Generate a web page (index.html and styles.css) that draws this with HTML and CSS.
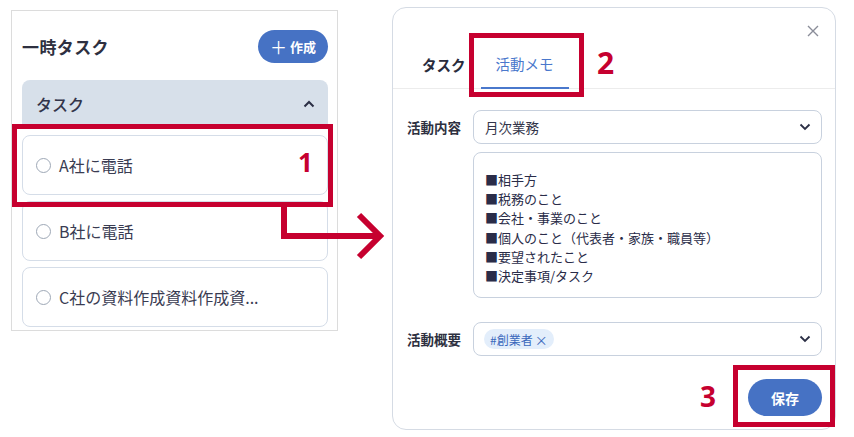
FILE: index.html
```html
<!DOCTYPE html>
<html lang="ja">
<head>
<meta charset="utf-8">
<link rel="stylesheet" href="styles.css">
</head>
<body>
<div class="canvas">
  <section class="panel">
    <div class="panel-head">
      <h1 class="panel-title">一時タスク</h1>
      <button class="btn-create"><span class="plus">＋</span>作成</button>
    </div>
    <div class="acc-head">
      <span>タスク</span>
      <svg class="chev-up" width="12" height="8" viewBox="0 0 12 8"><path d="M1.5 6.5 L6 2 L10.5 6.5" fill="none" stroke="#2b2f45" stroke-width="2"/></svg>
    </div>
    <div class="acc-body">
      <div class="card"><span class="radio"></span><span class="card-text">A社に電話</span></div>
      <div class="card"><span class="radio"></span><span class="card-text">B社に電話</span></div>
      <div class="card"><span class="radio"></span><span class="card-text">C社の資料作成資料作成資...</span></div>
    </div>
  </section>

  <section class="modal">
    <div class="modal-top">
      <span class="close">
        <svg width="12" height="12" viewBox="0 0 12 12"><path d="M1 1 L11 11 M11 1 L1 11" stroke="#8a8d99" stroke-width="1.4"/></svg>
      </span>
    </div>
    <div class="tabs">
      <div class="tab tab-plain">タスク</div>
      <div class="tab tab-active">活動メモ</div>
    </div>
    <div class="form">
      <div class="row">
        <label class="lbl">活動内容</label>
        <div class="fields">
          <div class="select">
            <span>月次業務</span>
            <svg class="chev" width="12" height="8" viewBox="0 0 12 8"><path d="M1.5 1.5 L6 6 L10.5 1.5" fill="none" stroke="#2b2f45" stroke-width="1.8"/></svg>
          </div>
          <div class="textarea">
            <div>■相手方</div>
            <div>■税務のこと</div>
            <div>■会社・事業のこと</div>
            <div>■個人のこと（代表者・家族・職員等）</div>
            <div>■要望されたこと</div>
            <div>■決定事項/タスク</div>
          </div>
        </div>
      </div>
      <div class="row row-2">
        <label class="lbl">活動概要</label>
        <div class="fields">
          <div class="select">
            <span class="tag">#創業者 <span class="tag-x">×</span></span>
            <svg class="chev" width="12" height="8" viewBox="0 0 12 8"><path d="M1.5 1.5 L6 6 L10.5 1.5" fill="none" stroke="#2b2f45" stroke-width="1.8"/></svg>
          </div>
        </div>
      </div>
      <div class="actions">
        <button class="btn-save">保存</button>
      </div>
    </div>
  </section>

  <div class="mark mark1"></div>
  <div class="mark mark2"></div>
  <div class="mark mark3"></div>
  <span class="num num1">1</span>
  <span class="num num2">2</span>
  <span class="num num3">3</span>
  <svg class="arrow" width="854" height="437" viewBox="0 0 854 437">
    <path d="M284 206 L284 236 L380 236" fill="none" stroke="#c6002f" stroke-width="6"/>
    <path d="M359 215 L380 236 L359 257" fill="none" stroke="#c6002f" stroke-width="6"/>
  </svg>
</div>
</body>
</html>
```

FILE: styles.css
```css
* { box-sizing: border-box; }
html, body { margin: 0; padding: 0; background: #fff; }
body {
  font-family: "Noto Sans CJK JP", "Noto Sans", sans-serif;
  color: #33354a;
}
.canvas {
  position: relative;
  width: 854px;
  height: 437px;
  display: flex;
  align-items: flex-start;
  padding: 7px 0 0 11px;
}

/* left panel */
.panel {
  width: 327px;
  height: 321px;
  margin-top: 3px;
  border: 1px solid #dcdcdc;
  padding: 19px 9px 3px 10px;
  display: flex;
  flex-direction: column;
}
.panel-head {
  display: flex;
  justify-content: space-between;
  align-items: center;
  height: 33px;
}
.panel-title {
  margin: 0;
  font-size: 17px;
  font-weight: 700;
  color: #2e3040;
  letter-spacing: 0.4px;
}
.btn-create {
  width: 70px;
  height: 33px;
  border: none;
  border-radius: 17px;
  background: #4672c4;
  color: #fff;
  font-family: inherit;
  font-size: 13px;
  font-weight: 700;
  display: flex;
  align-items: center;
  justify-content: center;
  gap: 3px;
  padding: 0;
}
.plus { font-size: 17px; font-weight: 400; line-height: 1; }
.acc-head {
  margin-top: 17px;
  height: 48px;
  background: #d7e0ea;
  border-radius: 8px 8px 0 0;
  display: flex;
  align-items: center;
  justify-content: space-between;
  padding: 0 13px 0 14px;
  font-size: 16px;
  font-weight: 500;
  color: #33354a;
}
.acc-body {
  display: flex;
  flex-direction: column;
  gap: 6px;
  padding-top: 7px;
}
.card {
  height: 60px;
  border: 1px solid #d5dde8;
  border-radius: 8px;
  display: flex;
  align-items: center;
  padding-left: 13px;
  gap: 8px;
  font-size: 16px;
  color: #3a3c52;
}
.radio {
  width: 15px;
  height: 15px;
  border: 1.5px solid #9ea8b6;
  border-radius: 50%;
}

/* modal */
.modal {
  margin-left: 54px;
  width: 444px;
  height: 423px;
  border: 1px solid #d5dbe4;
  border-radius: 14px;
  display: flex;
  flex-direction: column;
}
.modal-top {
  height: 29px;
  display: flex;
  justify-content: flex-end;
  align-items: flex-end;
  padding-right: 16px;
}
.close { display: block; height: 12px; }
.close svg { display: block; }
.tabs {
  display: flex;
  height: 52px;
  border-bottom: 1px solid #ececec;
  padding-left: 14px;
  padding-top: 3px;
}
.tab {
  padding: 0 15px;
  display: flex;
  align-items: center;
  font-size: 14.5px;
}
.tab-plain { font-weight: 700; color: #2a2c3c; }
.tab-active {
  color: #4a78cc;
  border-bottom: 2px solid #4a78cc;
  margin-bottom: -1px;
}
.form {
  padding: 21px 13px 0 14px;
  display: flex;
  flex-direction: column;
}
.row {
  display: flex;
  align-items: flex-start;
}
.row-2 { margin-top: 24px; }
.lbl {
  width: 66px;
  height: 34px;
  display: flex;
  align-items: center;
  font-size: 13.5px;
  font-weight: 700;
  color: #2e3040;
}
.fields {
  flex: 1;
  display: flex;
  flex-direction: column;
  gap: 8px;
}
.select {
  height: 34px;
  border: 1px solid #c8d1de;
  border-radius: 8px;
  display: flex;
  align-items: center;
  justify-content: space-between;
  padding: 0 10px 0 11px;
  font-size: 13.5px;
  color: #33354a;
}
.chev { display: block; }
.textarea {
  height: 146px;
  border: 1px solid #c8d1de;
  border-radius: 8px;
  padding: 17px 11px 0 11px;
  font-size: 13px;
  line-height: 19.2px;
  color: #2a2c48;
}
.tag {
  background: #e3eefb;
  color: #3a68bc;
  font-size: 12px;
  height: 20px;
  border-radius: 10px;
  padding: 0 6px 0 6px;
  display: flex;
  align-items: center;
  gap: 2px;
  margin-left: -1px;
}
.tag-x { font-size: 13px; }
.actions {
  display: flex;
  justify-content: flex-end;
  margin-top: 23px;
}
.btn-save {
  width: 74px;
  height: 37px;
  border: none;
  border-radius: 19px;
  background: #4672c4;
  color: #fff;
  font-family: inherit;
  font-size: 14px;
  font-weight: 700;
  padding: 0;
}

/* annotations */
.mark {
  position: absolute;
  border: 5px solid #c6002f;
}
.mark1 { left: 12px; top: 124px; width: 321px; height: 83px; }
.mark2 { left: 469px; top: 33px; width: 115px; height: 64px; }
.mark3 { left: 733px; top: 365px; width: 102px; height: 62px; }
.num {
  position: absolute;
  color: #c6002f;
  font-family: "Noto Sans", "Noto Sans CJK JP", sans-serif;
  font-weight: 700;
  line-height: 1;
}
.num1 { left: 298px; top: 149px; font-size: 26px; }
.num2 { left: 597px; top: 48px; font-size: 30px; }
.num3 { left: 700px; top: 382px; font-size: 28px; }
.arrow { position: absolute; left: 0; top: 0; pointer-events: none; }
```
